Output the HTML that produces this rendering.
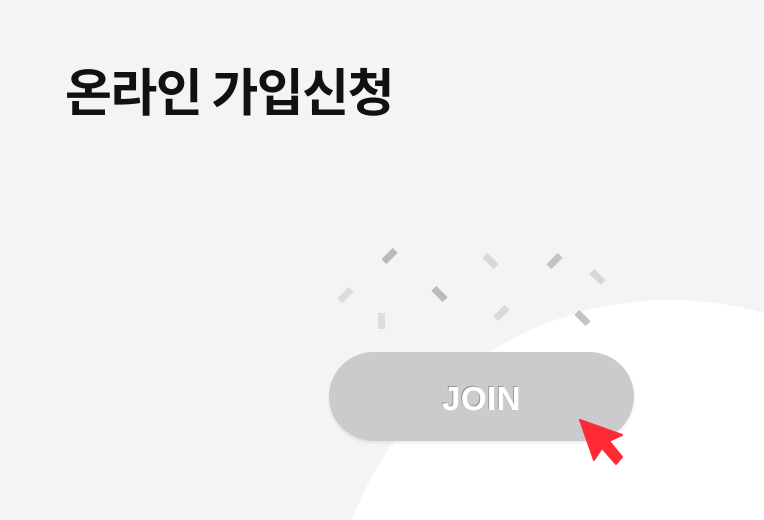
<!DOCTYPE html>
<html><head><meta charset="utf-8"><style>
html,body{margin:0;padding:0;width:764px;height:520px;overflow:hidden}
body{background:#f4f4f6;position:relative;font-family:"Liberation Sans","Noto Sans CJK KR",sans-serif}
.w{position:absolute;left:0;top:0;width:764px;height:520px;overflow:hidden}
.t{position:absolute;left:65px;top:54px;font-size:51px;font-weight:700;color:#111;letter-spacing:-1.5px;font-family:"Noto Sans CJK KR",sans-serif;line-height:70px}
.c{position:absolute;left:330px;top:300px;width:680px;height:680px;border-radius:50%;background:#fff}
.b{position:absolute;left:329px;top:352px;width:305px;height:89px;border-radius:45px;background:#cbcbcd;box-shadow:0 2px 3px rgba(0,0,0,.08)}
.j{position:absolute;left:329px;top:352px;width:305px;height:89px;line-height:93px;text-align:center;color:#fff;font-weight:700;font-size:33px;letter-spacing:0.5px;text-shadow:-1px -1px 0 #999}
.p{position:absolute;width:7px;height:16px}
</style></head><body><div class="w">
<div class="t">온라인 가입신청</div>
<div class="c"></div>
<div class="p" style="left:386px;top:248px;background:#bbb;transform:rotate(45deg)"></div>
<div class="p" style="left:487px;top:253px;background:#d8d8d8;transform:rotate(-45deg)"></div>
<div class="p" style="left:551px;top:253px;background:#c4c4c4;transform:rotate(45deg)"></div>
<div class="p" style="left:594px;top:269px;background:#d8d8d8;transform:rotate(-45deg)"></div>
<div class="p" style="left:342px;top:287px;background:#dcdcdc;transform:rotate(45deg)"></div>
<div class="p" style="left:436px;top:286px;background:#bbb;transform:rotate(-45deg)"></div>
<div class="p" style="left:498px;top:305px;background:#d8d8d8;transform:rotate(45deg)"></div>
<div class="p" style="left:579px;top:310px;background:#c4c4c4;transform:rotate(-45deg)"></div>
<div class="p" style="left:378px;top:313px;background:#dcdcdc"></div>
<div class="b"></div>
<div class="j">JOIN</div>
<svg style="position:absolute;left:576px;top:418px" width="52" height="52" viewBox="0 0 52 52">
<path d="M4 2 L46 17 L33 23 L46 39 L40 46 L26 30 L18 42 Z" fill="#ff2a35" stroke="#ff2a35" stroke-width="2" stroke-linejoin="round"/>
</svg>
</div></body></html>
